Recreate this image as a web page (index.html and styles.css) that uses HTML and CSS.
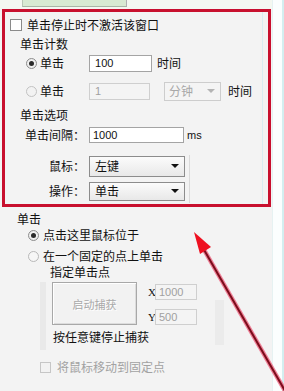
FILE: index.html
```html
<!DOCTYPE html>
<html>
<head>
<meta charset="utf-8">
<link rel="stylesheet" href="styles.css">
</head>
<body>
<div class="page">
  <div class="main">
    <div class="topbar"><div class="topinput"><span class="tscroll"></span></div></div>
    <div class="redbox">
      <div class="inner">
        <div class="row r-check"><span class="cb"></span><span class="t-check">单击停止时不激活该窗口</span></div>
        <div class="row r-head">单击计数</div>
        <div class="row r-c1">
          <span class="radio on"></span><span class="t-radio">单击</span>
          <span class="tb tb-count">100</span><span class="t-time">时间</span>
        </div>
        <div class="row r-c2">
          <span class="radio dis"></span><span class="t-radio">单击</span>
          <span class="tb tb-count2 dis">1</span>
          <span class="sel sel-unit dis"><span class="sel-text">分钟</span><span class="caret"></span></span>
          <span class="t-time2">时间</span>
        </div>
        <div class="row r-head2">单击选项</div>
        <div class="row r-int">
          <span class="lbl">单击间隔：</span><span class="tb tb-int">1000</span><span class="t-ms">ms</span>
        </div>
        <div class="selgroup">
          <div class="selrows">
            <div class="row r-mouse">
              <span class="lbl">鼠标：</span>
              <span class="sel sel-wide"><span class="sel-text">左键</span><span class="caret"></span></span>
            </div>
            <div class="row r-op">
              <span class="lbl">操作：</span>
              <span class="sel sel-wide sel-op"><span class="sel-text">单击</span><span class="caret"></span></span>
            </div>
          </div>
          <div class="vline"></div>
        </div>
      </div>
    </div>
    <div class="lower">
      <div class="l-head">单击</div>
      <div class="l-r l-r1"><span class="radio on"></span><span class="t-lr">点击这里鼠标位于</span></div>
      <div class="l-r l-r2"><span class="radio dis2"></span><span class="t-lr">在一个固定的点上单击</span></div>
      <div class="l-sub">指定单击点</div>
      <div class="capture">
        <div class="bar"></div>
        <div class="capcol">
          <div class="caprow">
            <div class="capbtn"><span>启动捕获</span></div>
            <div class="xy">
              <div class="xyrow"><span class="xyl">X</span><span class="tb tb-xy dis">1000</span></div>
              <div class="xyrow xyrow2"><span class="xyl">Y</span><span class="tb tb-xy dis">500</span></div>
            </div>
          </div>
          <div class="hint">按任意键停止捕获</div>
        </div>
        <div class="bar2"></div>
      </div>
      <div class="l-cbrow"><span class="cb dis"></span><span class="t-cbdis">将鼠标移动到固定点</span></div>
    </div>
  </div>
  <div class="rside"></div>
  <svg class="arrow" width="284" height="391" viewBox="0 0 284 391">
    <line x1="203" y1="248" x2="292" y2="403" stroke="#ec5a78" stroke-width="4.5" stroke-opacity="0.75"/>
    <line x1="203" y1="248" x2="292" y2="403" stroke="#7c0d1c" stroke-width="2"/>
    <polygon points="194,232 211,247 200,254" fill="#ee1020"/>
  </svg>
</div>
</body>
</html>
```

FILE: styles.css
```css
* { box-sizing: border-box; margin: 0; padding: 0; }
html, body { width: 284px; height: 391px; overflow: hidden; }
body {
  font: 12px/12px "Noto Sans CJK SC", "Liberation Sans", sans-serif;
  color: #111;
  background: #f3f3f3;
}
.page { position: relative; display: flex; width: 284px; height: 391px; }
.main { width: 272px; background: #f3f3f3; }
.rside { flex: 1; background: #fbfefe; border-left: 1px solid #e6f2f2; border-right: 2px solid #d4eef0; }

.topbar { height: 9px; background: #f4f8f1; display: flex; }
.topinput {
  position: relative;
  margin-left: 22px; width: 105px; height: 7px;
  background: #d8ead2;
  border-left: 1px solid #b9c6b5;
  border-right: 1px solid #b0b0b0;
  border-bottom: 1px solid #a9b6a6;
}

.redbox {
  margin-left: 2px;
  width: 269px;
  height: 198px;
  border: 3px solid #c8102e;
}
.inner { width: 258px; height: 192px; border-right: 1px solid #d9eef2; }

.row { display: flex; align-items: center; }
.r-check { height: 26px; }
.cb { width: 12px; height: 12px; border: 1px solid #8a8a8a; background: #fff; flex: none; }
.r-check .cb { margin-left: 5px; }
.t-check { margin-left: 5px; white-space: nowrap; }
.r-head { height: 12px; padding-left: 15px; }

.radio {
  width: 11px; height: 11px; border-radius: 50%;
  border: 1px solid #8d8d8d;
  background: radial-gradient(circle, #fff 0, #e2e2e2 100%);
  display: flex; align-items: center; justify-content: center; flex: none;
}
.radio.on::after { content: ""; width: 5px; height: 5px; border-radius: 50%; background: #2a2a2a; }
.radio.dis { border-color: #c2c2c2; background: #f2f2f2; }
.radio.dis2 { border-color: #b8b8b8; background: #f6f6f6; }

.r-c1 { margin-top: 2px; height: 22px; }
.r-c2 { margin-top: 6px; height: 22px; }
.r-c1 .radio, .r-c2 .radio { margin-left: 21px; }
.t-radio { margin-left: 3px; }

.tb {
  display: flex; align-items: center;
  border: 1px solid #a4a4a4;
  background: #fff;
  padding-left: 5px;
  font: 11px/11px "Liberation Sans", sans-serif;
  color: #111;
  flex: none;
}
.tb.dis { background: #f4f4f4; border-color: #cfcfcf; color: #a0a0a0; }
.tb-count { margin-left: 25px; width: 63px; height: 17px; }
.tb-count2 { margin-left: 25px; width: 61px; height: 17px; }
.t-time { margin-left: 5px; }

.sel {
  display: flex; align-items: center;
  border: 1px solid #8c8c8c;
  background: linear-gradient(#fbfbfb, #e8e8e8);
  padding-left: 4px;
  flex: none;
}
.sel.dis { border-color: #cdcdcd; background: #f4f4f4; color: #a8a8a8; }
.caret {
  margin-left: auto; margin-right: 5px;
  width: 0; height: 0;
  border-left: 4px solid transparent;
  border-right: 4px solid transparent;
  border-top: 4px solid #111;
}
.sel.dis .caret { border-top-color: #b4b4b4; }
.sel-unit { margin-left: 14px; width: 57px; height: 19px; }
.t-time2 { margin-left: 7px; }

.r-head2 { margin-top: 7px; height: 12px; padding-left: 15px; }
.r-int { margin-top: 4px; height: 20px; }
.lbl { width: 80px; text-align: right; flex: none; white-space: nowrap; }
.tb-int { margin-left: 4px; width: 95px; height: 16px; padding-left: 3px; }
.t-ms { margin-left: 3px; font: 11px/11px "Liberation Sans", sans-serif; }

.selgroup { display: flex; margin-top: 10px; }
.r-mouse { height: 22px; }
.r-op { margin-top: 4px; height: 20px; }
.sel-wide { margin-left: 4px; width: 96px; height: 21px; padding-left: 5px; }
.sel-op { height: 19px; }
.vline { width: 1px; height: 48px; margin-left: 4px; background: #dadada; }

.lower { position: relative; }
.l-head { margin-top: 6px; height: 12px; padding-left: 17px; }
.l-r { display: flex; align-items: center; height: 14px; }
.l-r1 { margin-top: 3px; }
.l-r2 { margin-top: 7px; }
.l-r .radio { margin-left: 28px; }
.t-lr { margin-left: 4px; white-space: nowrap; }
.l-sub { margin-top: 3px; height: 12px; padding-left: 50px; }

.capture { display: flex; align-items: flex-start; margin-top: 4px; margin-left: 40px; height: 68px; }
.bar { width: 6px; height: 68px; background: #e9e9e9; flex: none; }
.capcol { margin-left: 6px; }
.caprow { display: flex; }
.capbtn {
  width: 85px; height: 43px;
  border: 1px solid #a8a8a8;
  box-shadow: inset 1px 1px 0 #fff, inset -1px -1px 0 #dcdcdc;
  background: #f2f2f2;
  display: flex; align-items: center; justify-content: center;
  color: #a9a9a9;
  font-size: 11px;
  text-shadow: 1px 1px 0 #fff;
}
.xy { margin-left: 11px; padding-top: 2px; }
.xyrow { display: flex; align-items: center; height: 16px; }
.xyrow2 { margin-top: 9px; }
.xyl { width: 7px; font: 11px/11px "Liberation Serif", serif; }
.tb-xy { width: 42px; height: 16px; padding-left: 3px; }
.hint { margin-top: 6px; margin-left: 1px; height: 12px; white-space: nowrap; }
.bar2 { width: 9px; height: 45px; margin-top: 18px; margin-left: 18px; background: #ebebeb; }

.l-cbrow { display: flex; align-items: center; margin-top: 11px; height: 12px; }
.cb.dis { width: 11px; height: 11px; margin-left: 40px; border-color: #c6c6c6; background: #f2f2f2; }
.t-cbdis { margin-left: 6px; color: #a2a2a2; white-space: nowrap; }

.arrow { position: absolute; left: 0; top: 0; pointer-events: none; }
```
